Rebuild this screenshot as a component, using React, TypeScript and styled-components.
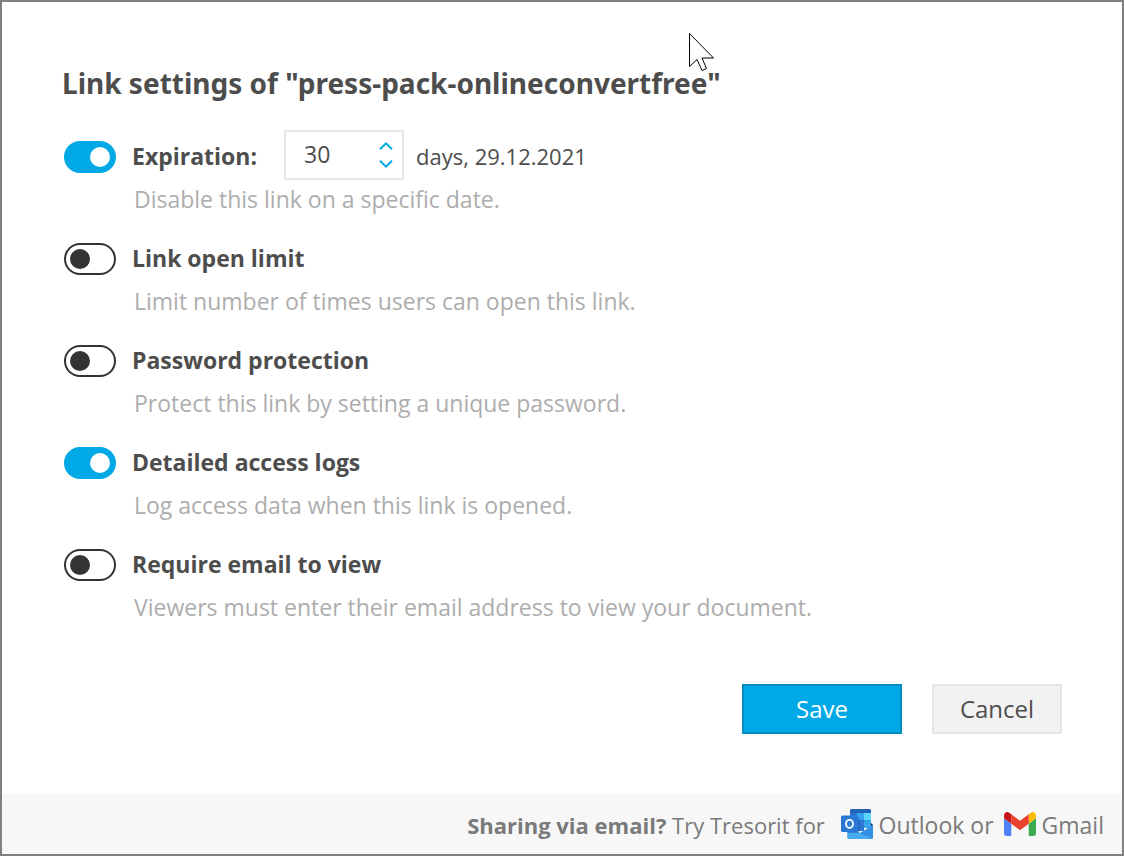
import { useState } from "react";
import type { ReactNode } from "react";
import styled, { createGlobalStyle } from "styled-components";

const GlobalStyle = createGlobalStyle`
  *, *::before, *::after { box-sizing: border-box; }
  body {
    margin: 0;
    background: #ffffff;
    color: #4d4d4d;
    font-family: "Segoe UI", "Open Sans", "Noto Sans", sans-serif;
    font-size: 23px;
    line-height: 32px;
  }
`;

const Dialog = styled.main`
  position: relative;
  display: flex;
  flex-direction: column;
  min-height: 100vh;
  border: 2px solid #808080;
`;

const Form = styled.form`
  flex: 1;
  display: flex;
  flex-direction: column;
  padding: 62px 60px 60px;
`;

const Title = styled.h1`
  margin: 0 0 28px;
  font-family: "Segoe UI", "Noto Sans", sans-serif;
  font-size: 28px;
  line-height: 38px;
  font-weight: 700;
  overflow-wrap: anywhere;
`;

const Settings = styled.div`
  display: flex;
  flex-direction: column;
  gap: 18px;
  padding-left: 2px;
`;

const SettingHead = styled.div`
  display: flex;
  align-items: center;
  height: 54px;
`;

const SettingLabel = styled.label`
  margin-left: 16px;
  padding-bottom: 2px;
  font-weight: 700;
`;

const ExpiryText = styled.span`
  padding-bottom: 2px;
  font-size: 22px;
`;

const Description = styled.p`
  margin: 0 0 0 70px;
  line-height: 30px;
  color: #adadad;
`;

const Toggle = styled.input`
  appearance: none;
  flex: none;
  display: flex;
  align-items: center;
  width: 52px;
  height: 32px;
  margin: 0;
  padding: 0 4px;
  border: 2px solid #333333;
  border-radius: 16px;
  background: #ffffff;
  cursor: pointer;

  &::before {
    content: "";
    width: 20px;
    height: 20px;
    border-radius: 50%;
    background: #333333;
  }

  &:checked {
    justify-content: flex-end;
    border-color: #00a9e5;
    background: #00a9e5;
  }

  &:checked::before {
    background: #ffffff;
  }
`;

const NumberBox = styled.div`
  align-self: flex-start;
  display: flex;
  align-items: center;
  width: 120px;
  height: 50px;
  margin: 0 12px 0 27px;
  padding: 0 8px 0 18px;
  border: 2px solid #e6e6e6;
  background: #ffffff;
`;

const NumberInput = styled.input`
  appearance: textfield;
  flex: 1;
  min-width: 0;
  padding: 0 0 2px;
  border: 0;
  outline: 0;
  background: transparent;
  color: inherit;
  font: inherit;

  &::-webkit-inner-spin-button,
  &::-webkit-outer-spin-button {
    appearance: none;
    margin: 0;
  }
`;

const Stepper = styled.div`
  display: flex;
  flex-direction: column;
`;

const StepButton = styled.button`
  display: flex;
  padding: 5px 1px;
  border: 0;
  background: transparent;
  cursor: pointer;
`;

const Actions = styled.div`
  display: flex;
  flex-wrap: wrap;
  justify-content: flex-end;
  gap: 30px;
  margin-top: 62px;
`;

const ActionButton = styled.button<{ $primary?: boolean }>`
  width: ${(p) => (p.$primary ? 160 : 130)}px;
  height: 50px;
  padding: 0;
  border: 2px solid ${(p) => (p.$primary ? "#008cbe" : "#e6e6e6")};
  background: ${(p) => (p.$primary ? "#00a9e5" : "#f2f2f2")};
  color: ${(p) => (p.$primary ? "#ffffff" : "#4d4d4d")};
  font-family: inherit;
  font-size: 24px;
  line-height: 32px;
  cursor: pointer;
`;

const Footer = styled.footer`
  display: flex;
  flex-wrap: wrap;
  align-items: center;
  justify-content: flex-end;
  min-height: 60px;
  padding: 2px 18px 0;
  background: #f7f7f7;
  color: #7a7a7a;
  white-space: pre-wrap;
`;

const FooterLead = styled.span`
  font-size: 22px;
`;

const AppLink = styled.a`
  display: inline-flex;
  align-items: center;
  gap: 6px;
  margin-left: 10px;
  color: inherit;
  text-decoration: none;

  svg {
    margin-bottom: 2px;
  }
`;

const Pointer = styled.svg`
  position: absolute;
  left: 687px;
  top: 31px;
  pointer-events: none;
`;

function Chevron({ up }: { up?: boolean }) {
  return (
    <svg width="14" height="8" viewBox="0 0 14 8" fill="none" stroke="#00a9e5" strokeWidth="2" aria-hidden="true">
      <path d={up ? "M1 7.2 L7 1.4 L13 7.2" : "M1 0.8 L7 6.6 L13 0.8"} />
    </svg>
  );
}

function OutlookIcon() {
  return (
    <svg width="32" height="30" viewBox="0 0 32 30" aria-hidden="true">
      <path d="M9 1.500A1.500 1.500 0 0 1 10.500 0H28.500A1.500 1.500 0 0 1 30 1.500V5H9Z" fill="#2160b8" />
      <path d="M9 4H16V11H9Z" fill="#2873cf" />
      <path d="M16 4H23V11H16Z" fill="#36a2ea" />
      <path d="M23 4H30V11H23Z" fill="#5ed6fc" />
      <path d="M9 11H16V22H9Z" fill="#2358ac" />
      <path d="M16 11H23V22H16Z" fill="#2a78d2" />
      <path d="M23 11H30V19H23Z" fill="#37a3ea" />
      <path d="M30 14L32 15.500L30 17.500Z" fill="#0a2b66" />
      <path d="M6.500 18L19 24L32 16V28.500A1.500 1.500 0 0 1 30.500 30H8A1.500 1.500 0 0 1 6.500 28.500Z" fill="#3390e4" />
      <path d="M6.500 19L31.500 29.600Q31 30 30.500 30H8A1.500 1.500 0 0 1 6.500 28.500Z" fill="#46aaf0" />
      <path d="M16 8H17A1.500 1.500 0 0 1 18.500 9.500V22.500Q18.500 24 17 24H6.500V22.500H16Z" fill="#1c4f9c" opacity="0.4" />
      <rect x="0" y="6.500" width="17" height="16.500" rx="1.500" fill="#2b77d6" />
      <ellipse cx="8.500" cy="14.800" rx="3.500" ry="4.100" fill="none" stroke="#eef4fc" strokeWidth="2" />
    </svg>
  );
}

function GmailIcon() {
  return (
    <svg width="32" height="24" viewBox="52 42 88 66" aria-hidden="true">
      <path fill="#4f80f7" d="M58 108h14V74L52 59v43c0 3.320 2.690 6 6 6" />
      <path fill="#3bab50" d="M120 108h14c3.320 0 6-2.690 6-6V59l-20 15" />
      <path fill="#fbbc04" d="M120 48v26l20-15v-8c0-7.420-8.470-11.650-14.400-7.200" />
      <path fill="#ea4030" d="M72 74V48l24 18 24-18v26L96 92" />
      <path fill="#c5171a" d="M52 51v8l20 15V48l-5.600-4.200c-5.940-4.450-14.400-.22-14.400 7.200" />
    </svg>
  );
}

interface SettingProps {
  id: string;
  label: string;
  description: string;
  on?: boolean;
  children?: ReactNode;
}

function Setting({ id, label, description, on = false, children }: SettingProps) {
  return (
    <div>
      <SettingHead>
        <Toggle id={id} type="checkbox" role="switch" defaultChecked={on} aria-describedby={`${id}-hint`} />
        <SettingLabel htmlFor={id}>{label}</SettingLabel>
        {children}
      </SettingHead>
      <Description id={`${id}-hint`}>{description}</Description>
    </div>
  );
}

function formatExpiry(days: number) {
  const date = new Date(2021, 10, 29 + days);
  const pad = (n: number) => String(n).padStart(2, "0");
  return `${pad(date.getDate())}.${pad(date.getMonth() + 1)}.${date.getFullYear()}`;
}

export default function App() {
  const [days, setDays] = useState(30);

  return (
    <>
      <GlobalStyle />
      <Dialog>
        <Form onSubmit={(e) => e.preventDefault()}>
          <Title>Link settings of "press-pack-onlineconvertfree"</Title>
          <Settings>
            <Setting id="expiration" label="Expiration:" description="Disable this link on a specific date." on>
              <NumberBox>
                <NumberInput
                  type="number"
                  min={1}
                  aria-label="Days until expiration"
                  value={days}
                  onChange={(e) => setDays(Number(e.target.value))}
                />
                <Stepper>
                  <StepButton type="button" aria-label="More days" onClick={() => setDays(days + 1)}>
                    <Chevron up />
                  </StepButton>
                  <StepButton type="button" aria-label="Fewer days" onClick={() => setDays(Math.max(1, days - 1))}>
                    <Chevron />
                  </StepButton>
                </Stepper>
              </NumberBox>
              <ExpiryText>days, {formatExpiry(days)}</ExpiryText>
            </Setting>
            <Setting
              id="open-limit"
              label="Link open limit"
              description="Limit number of times users can open this link."
            />
            <Setting
              id="password"
              label="Password protection"
              description="Protect this link by setting a unique password."
            />
            <Setting
              id="access-logs"
              label="Detailed access logs"
              description="Log access data when this link is opened."
              on
            />
            <Setting
              id="require-email"
              label="Require email to view"
              description="Viewers must enter their email address to view your document."
            />
          </Settings>
          <Actions>
            <ActionButton type="submit" $primary>
              Save
            </ActionButton>
            <ActionButton type="button">Cancel</ActionButton>
          </Actions>
        </Form>
        <Footer>
          <FooterLead>
            <strong>Sharing via email?</strong> Try Tresorit for{" "}
          </FooterLead>
          <AppLink href="#outlook">
            <OutlookIcon />
            Outlook
          </AppLink>
          <span> or</span>
          <AppLink href="#gmail">
            <GmailIcon />
            Gmail
          </AppLink>
        </Footer>
        <Pointer width="27" height="40" viewBox="0 0 27 40" aria-hidden="true">
          <path
            d="M0.500 0.500V33.500L8 26.500L13 37.500L17.500 35.500L13 25H24.500Z"
            fill="#ffffff"
            stroke="#000000"
          />
        </Pointer>
      </Dialog>
    </>
  );
}
